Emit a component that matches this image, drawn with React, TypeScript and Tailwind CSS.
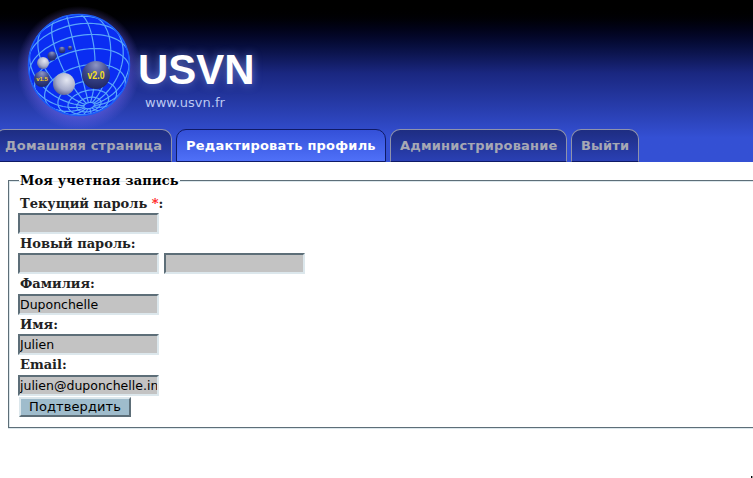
const tabs = [
  { label: 'Домашняя страница', active: false, width: 'w-[177px] -ml-[5px]' },
  { label: 'Редактировать профиль', active: true, width: 'w-[210px]' },
  { label: 'Администрирование', active: false, width: 'w-[177px]' },
  { label: 'Выйти', active: false, width: 'w-[68px]' },
];

// grid of the globe: parallels and meridians projected around a tilted pole
function globeLines() {
  const R = 51;
  const pole = [0.2, 0.8, 0.566];
  const u = [0.97, -0.24, 0];
  const v = [
    pole[1] * u[2] - pole[2] * u[1],
    pole[2] * u[0] - pole[0] * u[2],
    pole[0] * u[1] - pole[1] * u[0],
  ];
  const point = (lat: number, lon: number) => {
    const cl = Math.cos(lat);
    const sl = Math.sin(lat);
    const c = Math.cos(lon);
    const s = Math.sin(lon);
    return [0, 1, 2].map((i) => sl * pole[i] + cl * (c * u[i] + s * v[i]));
  };
  const lines: string[] = [];
  const trace = (pts: number[][]) => {
    let d = '';
    let pen = false;
    for (const p of pts) {
      if (p[2] < 0) {
        pen = false;
        continue;
      }
      d += `${pen ? 'L' : 'M'}${(60 + p[0] * R).toFixed(1)} ${(60 + p[1] * R).toFixed(1)}`;
      pen = true;
    }
    if (d) lines.push(d);
  };
  for (const lat of [-72, -54, -36, -18, 0, 18, 36, 54, 66, 76, 84]) {
    const pts = [];
    for (let a = 0; a <= 360; a += 4) pts.push(point((lat * Math.PI) / 180, (a * Math.PI) / 180));
    trace(pts);
  }
  for (let lon = 0; lon < 360; lon += 22.5) {
    const pts = [];
    for (let a = -80; a <= 84; a += 4) pts.push(point((a * Math.PI) / 180, (lon * Math.PI) / 180));
    trace(pts);
  }
  return lines;
}

function Logo() {
  const balls = [
    { x: 23, y: 74, r: 8, fill: 'url(#darkBall)' },
    { x: 24, y: 58, r: 6, fill: 'url(#lightBall)' },
    { x: 33, y: 51, r: 4.5, fill: 'url(#darkBall)' },
    { x: 43, y: 45, r: 3.3, fill: 'url(#darkBall)' },
    { x: 51, y: 43, r: 2.3, fill: 'url(#darkBall)' },
    { x: 45, y: 79, r: 11, fill: 'url(#lightBall)' },
    { x: 77, y: 70, r: 14, fill: 'url(#darkBall)' },
  ];
  return (
    <svg width="120" height="120" viewBox="0 0 120 120" className="shrink-0 overflow-visible">
      <defs>
        <radialGradient id="glow" cx="50%" cy="50%" r="50%">
          <stop offset="75%" stopColor="#7a68f0" stopOpacity="0.5" />
          <stop offset="100%" stopColor="#7a68f0" stopOpacity="0" />
        </radialGradient>
        <radialGradient id="lightBall" cx="62%" cy="32%" r="75%">
          <stop offset="0%" stopColor="#e4e7f2" />
          <stop offset="60%" stopColor="#a8aecb" />
          <stop offset="100%" stopColor="#50598e" />
        </radialGradient>
        <radialGradient id="darkBall" cx="50%" cy="15%" r="90%">
          <stop offset="0%" stopColor="#8e96c4" />
          <stop offset="50%" stopColor="#3a4488" />
          <stop offset="100%" stopColor="#1a2260" />
        </radialGradient>
        <clipPath id="globeClip">
          <circle cx="60" cy="60" r="51" />
        </clipPath>
      </defs>
      <circle cx="60" cy="63" r="62" fill="url(#glow)" />
      <circle cx="60" cy="60" r="51" fill="#0a2df2" />
      <g clipPath="url(#globeClip)" fill="none" stroke="#5aa6fa" strokeWidth="1.2">
        {globeLines().map((d, i) => (
          <path key={i} d={d} />
        ))}
      </g>
      <circle cx="60" cy="60" r="50.5" fill="none" stroke="#1a5cf8" strokeWidth="1.4" />
      {balls.map((b, i) => (
        <circle key={i} cx={b.x} cy={b.y} r={b.r} fill={b.fill} />
      ))}
      <text x="77" y="74" textAnchor="middle" fontSize="11" fontWeight="700" fill="#f6e020" fontFamily="Liberation Sans, sans-serif" textLength="17" lengthAdjust="spacingAndGlyphs">
        v2.0
      </text>
      <text x="23" y="76" textAnchor="middle" fontSize="6" fontWeight="700" fill="#f6d020" fontFamily="Liberation Sans, sans-serif">
        v1.5
      </text>
    </svg>
  );
}

function TextInput({ value = '' }: { value?: string }) {
  return (
    <input
      type="text"
      defaultValue={value}
      className="h-[21px] w-[141px] border-2 border-t-[#5d6e78] border-l-[#5d6e78] border-r-[#dce7ec] border-b-[#dce7ec] bg-[#c3c3c3] px-0 text-[12.5px] leading-[17px] text-black outline-none font-['DejaVu_Sans',sans-serif]"
    />
  );
}

function Field({ label, children }: { label: React.ReactNode; children: React.ReactNode }) {
  return (
    <div>
      <div className="h-[19.45px] pl-[2px] text-[13px] leading-[19px] font-bold text-[#222] font-['DejaVu_Serif',serif]">
        {label}
      </div>
      <div className="flex gap-[5px]">{children}</div>
    </div>
  );
}

export default function App() {
  return (
    <div className="relative h-[478px] w-[753px] overflow-hidden bg-white">
      <header className="flex h-[162px] flex-col bg-gradient-to-b from-black from-[3%] via-[#1a2780] via-[45%] to-[#3450d4] to-[85%]">
        <div className="flex h-[129px] pl-[19px] pt-[5px]">
          <Logo />
          <div className="relative -ml-px flex flex-col">
            <div className="mt-[37px] text-[42px] leading-[56px] font-bold text-white [text-shadow:0_0_10px_rgba(150,175,255,0.6)] font-['Liberation_Sans',sans-serif]">
              USVN
            </div>
            <div className="ml-[7px] mt-[-3px] text-[13px] leading-[16px] text-[#bcc8f2] font-['DejaVu_Sans',sans-serif]">
              www.usvn.fr
            </div>
          </div>
        </div>
        <nav className="relative flex h-[33px] gap-[4px]">
          {tabs.map((tab) => (
            <a
              key={tab.label}
              className={
                tab.active
                  ? `flex items-center rounded-t-[10px] border border-[#0f1a66] bg-gradient-to-b from-[#3450d8] to-[#4f70f8] pl-[9px] text-[13px] font-bold tracking-[0.2px] text-white font-['DejaVu_Sans',sans-serif] ${tab.width}`
                  : `flex items-center rounded-t-[10px] border border-[#8f93ab] border-b-[#0f1a66] bg-gradient-to-b from-[#1e2d82] to-[#2a40b4] pl-[9px] text-[13px] font-bold tracking-[0.2px] text-[#a6a8b4] font-['DejaVu_Sans',sans-serif] ${tab.width}`
              }
            >
              {tab.label}
            </a>
          ))}
        </nav>
      </header>

      <main className="pl-[8px] pt-[10px]">
        <fieldset className="h-[256px] w-[800px] border border-[#5d6e78] pb-0 pl-[9px] pr-0 pt-0 shadow-[inset_1px_1px_0_#dce7ec,0_1px_0_#dce7ec]">
          <legend className="ml-px px-[1px] text-[13px] leading-[17px] font-bold tracking-[0.15px] text-black font-['DejaVu_Serif',serif]">
            Моя учетная запись
          </legend>
          <div className="mt-[4.5px] flex flex-col">
            <Field
              label={
                <>
                  Текущий пароль <span className="text-[#ff2020]">*</span>:
                </>
              }
            >
              <TextInput />
            </Field>
            <Field label="Новый пароль:">
              <TextInput />
              <TextInput />
            </Field>
            <Field label="Фамилия:">
              <TextInput value="Duponchelle" />
            </Field>
            <Field label="Имя:">
              <TextInput value="Julien" />
            </Field>
            <Field label="Email:">
              <TextInput value="julien@duponchelle.in" />
            </Field>
            <button
              type="button"
              className="ml-[1px] mt-[1.25px] h-[20px] w-[112px] border-2 border-t-[#dce7ec] border-l-[#dce7ec] border-r-[#5d6e78] border-b-[#5d6e78] bg-[#9fbccc] text-[13px] leading-[15px] tracking-[0.1px] text-black font-['DejaVu_Sans',sans-serif]"
            >
              Подтвердить
            </button>
          </div>
        </fieldset>
      </main>

      <div className="absolute bottom-0 right-0 flex h-[2px] w-[2px]">
        <div className="w-px bg-black" />
        <div className="w-px bg-[#999]" />
      </div>
    </div>
  );
}
